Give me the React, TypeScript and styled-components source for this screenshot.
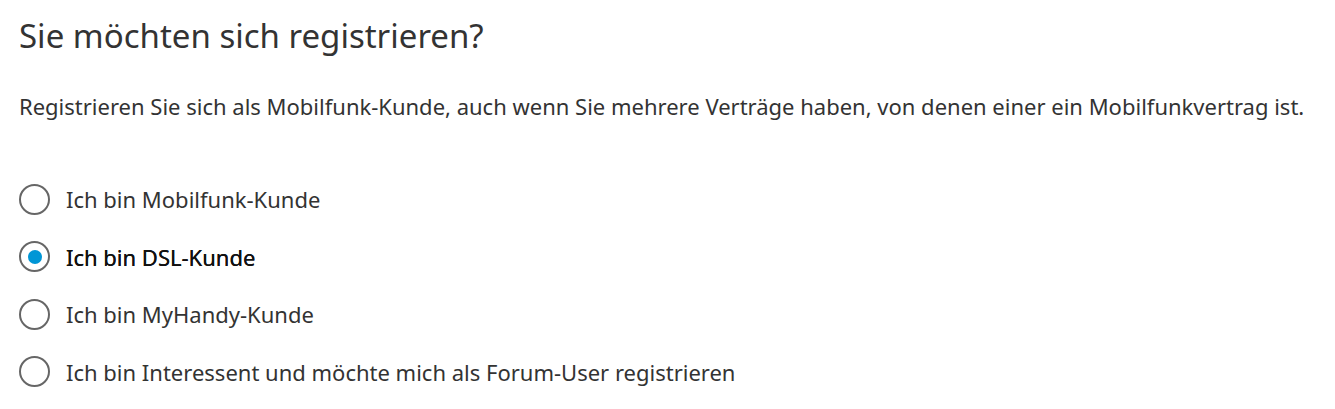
import React, { useState } from "react";
import styled, { createGlobalStyle } from "styled-components";

const Global = createGlobalStyle`
  html, body { margin: 0; padding: 0; background: #fff; }
  body { font-family: "Noto Sans", "Open Sans", Arial, sans-serif; color: #333; }
`;

const Page = styled.div`
  padding: 14px 20px 0 19px;
`;

const Title = styled.h1`
  margin: 0;
  font-size: 33px;
  font-weight: 400;
  line-height: 44px;
  color: #333;
`;

const Lead = styled.p`
  margin: 33px 0 0 0;
  font-size: 22px;
  line-height: 30px;
  color: #333;
  white-space: nowrap;
`;

const Options = styled.div`
  margin-top: 62px;
  display: flex;
  flex-direction: column;
  gap: 25.5px;
`;

const Option = styled.label<{ $checked: boolean }>`
  display: flex;
  align-items: center;
  gap: 16px;
  cursor: pointer;
  font-size: 22px;
  line-height: 32px;
  color: ${(p) => (p.$checked ? "#111" : "#333")};
  font-weight: 400;
  text-shadow: ${(p) => (p.$checked ? "0 0 0.3px #111" : "none")};
`;

const Radio = styled.span<{ $checked: boolean }>`
  box-sizing: border-box;
  width: 31px;
  height: 31px;
  border-radius: 50%;
  border: 2px solid #666;
  display: flex;
  align-items: center;
  justify-content: center;
  flex-shrink: 0;
  &::after {
    content: "";
    width: 14px;
    height: 14px;
    border-radius: 50%;
    background: #0096d6;
    display: ${(p) => (p.$checked ? "block" : "none")};
  }
`;

const Hidden = styled.input`
  display: none;
`;

const items = [
  "Ich bin Mobilfunk-Kunde",
  "Ich bin DSL-Kunde",
  "Ich bin MyHandy-Kunde",
  "Ich bin Interessent und möchte mich als Forum-User registrieren",
];

export default function App() {
  const [sel, setSel] = useState(1);
  return (
    <Page>
      <Global />
      <Title>Sie möchten sich registrieren?</Title>
      <Lead>
        Registrieren Sie sich als Mobilfunk-Kunde, auch wenn Sie mehrere Verträge haben, von denen einer ein Mobilfunkvertrag ist.
      </Lead>
      <Options>
        {items.map((t, i) => (
          <Option key={t} $checked={sel === i}>
            <Hidden type="radio" name="reg" checked={sel === i} onChange={() => setSel(i)} />
            <Radio $checked={sel === i} />
            {t}
          </Option>
        ))}
      </Options>
    </Page>
  );
}
